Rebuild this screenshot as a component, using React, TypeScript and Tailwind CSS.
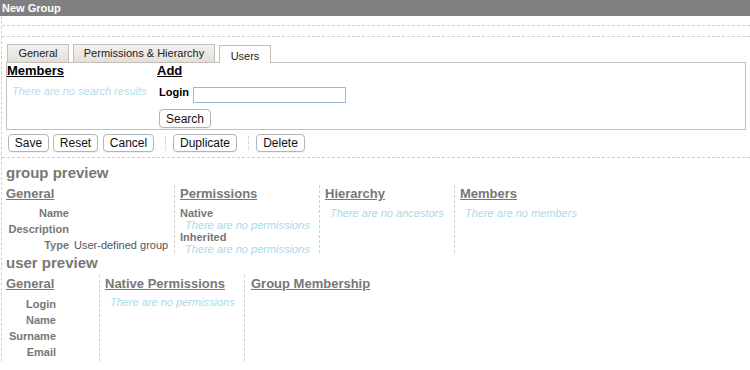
const font = { fontFamily: '"Liberation Sans", Arial, sans-serif' };

function Btn({ children, className = "" }: { children: React.ReactNode; className?: string }) {
  return (
    <button
      className={`h-[18px] rounded-[4px] border border-[#b4b4b4] bg-white text-[12px] leading-none text-[#111] text-center shadow-[0_1px_0_rgba(0,0,0,0.05)] ${className}`}
    >
      {children}
    </button>
  );
}

function Heading({ children, className = "" }: { children: React.ReactNode; className?: string }) {
  return <div className={`text-[13px] font-bold underline text-[#777] leading-[16px] ${className}`}>{children}</div>;
}

function Empty({ children, className = "" }: { children: React.ReactNode; className?: string }) {
  return <div className={`text-[11px] italic text-[#a6dbe6] leading-[12px] ${className}`}>{children}</div>;
}

export default function App() {
  return (
    <div style={font} className="w-[750px] h-[370px] bg-white overflow-hidden text-[#333]">
      {/* title bar */}
      <div className="h-[16px] bg-[#808080] text-white text-[11px] font-bold leading-[16px] px-[2px]">New Group</div>

      <div className="ml-[1px] border-l border-dashed border-[#cfcfcf] pt-[9px]">
        <div className="border-t border-dashed border-[#cfcfcf] h-[11px]" />
        <div className="border-t border-dashed border-[#cfcfcf] h-[8px]" />

        {/* tabs */}
        <div className="pl-[4px]">
          <div className="flex items-end gap-[4px] pl-[1px] h-[18px]">
            <div className="w-[62px] text-center h-[18px] border border-b-0 border-[#c3bfb8] bg-gradient-to-b from-[#f2f1ee] to-[#e3e0da] text-[11px] leading-[17px] text-[#222]">General</div>
            <div className="w-[142px] text-center h-[18px] border border-b-0 border-[#c3bfb8] bg-gradient-to-b from-[#f2f1ee] to-[#e3e0da] text-[11px] leading-[17px] text-[#222]">Permissions &amp; Hierarchy</div>
            <div className="w-[52px] text-center h-[18px] border border-b-0 border-[#c3bfb8] bg-white text-[11px] leading-[20px] text-[#222] -mb-px relative z-10">Users</div>
          </div>
          <div className="w-[740px] h-[68px] border border-[#c3bfb8] flex">
            <div className="w-[150px]">
              <div className="text-[13px] font-bold underline text-black leading-[16px]">Members</div>
              <Empty className="pl-[5px] mt-[6px] !text-[#b0e0ea]">There are no search results</Empty>
            </div>
            <div>
              <div className="text-[13px] font-bold underline text-black leading-[16px]">Add</div>
              <div className="flex items-start mt-[8px] pl-[2px]">
                <span className="text-[11px] font-bold text-black leading-[12px] mt-[-1px]">Login</span>
                <input className="ml-[4px] w-[153px] h-[16px] border border-[#9bb8d6] outline-none" />
              </div>
              <Btn className="ml-[2px] mt-[6px] w-[52px] h-[19px]">Search</Btn>
            </div>
          </div>
        </div>

        {/* buttons */}
        <div className="flex items-center h-[22px] pl-[6px] pt-[3px]">
          <Btn className="w-[41px]">Save</Btn>
          <Btn className="ml-[4px] w-[45px]">Reset</Btn>
          <Btn className="ml-[5px] w-[51px]">Cancel</Btn>
          <div className="ml-[11px] mr-[7px] h-[14px] border-l border-dotted border-[#c8c8c8]" />
          <Btn className="w-[64px]">Duplicate</Btn>
          <div className="ml-[11px] mr-[7px] h-[14px] border-l border-dotted border-[#c8c8c8]" />
          <Btn className="w-[49px]">Delete</Btn>
        </div>
        <div className="mt-[5px] border-t border-dashed border-[#cfcfcf]" />

        {/* group preview */}
        <div className="pl-[4px] pt-[6px]">
          <div className="text-[15px] font-bold text-[#777] leading-[17px]">group preview</div>
          <div className="flex mt-[4px]">
            <div className="w-[168px] pt-[1px]">
              <Heading>General</Heading>
              <div className="grid grid-cols-[63px_1fr] gap-x-[5px] mt-[3px] text-[11px] leading-[16px]">
                <span className="font-bold text-[#777] text-right">Name</span><span />
                <span className="font-bold text-[#777] text-right">Description</span><span />
                <span className="font-bold text-[#777] text-right">Type</span><span className="text-[#555]">User-defined group</span>
              </div>
            </div>
            <div className="w-[145px] border-l border-dashed border-[#cfcfcf] pl-[5px] pt-[1px] h-[68px]">
              <Heading>Permissions</Heading>
              <div className="text-[11px] font-bold text-[#777] leading-[12px] mt-[5px]">Native</div>
              <Empty className="pl-[5px]">There are no permissions</Empty>
              <div className="text-[11px] font-bold text-[#777] leading-[12px]">Inherited</div>
              <Empty className="pl-[5px]">There are no permissions</Empty>
            </div>
            <div className="w-[135px] border-l border-dashed border-[#cfcfcf] pl-[5px] pt-[1px] h-[68px]">
              <Heading>Hierarchy</Heading>
              <Empty className="pl-[5px] mt-[5px]">There are no ancestors</Empty>
            </div>
            <div className="border-l border-dashed border-[#cfcfcf] pl-[5px] pt-[1px] h-[68px]">
              <Heading>Members</Heading>
              <Empty className="pl-[5px] mt-[5px]">There are no members</Empty>
            </div>
          </div>

          {/* user preview */}
          <div className="text-[15px] font-bold text-[#777] leading-[17px] mt-[1px]">user preview</div>
          <div className="flex mt-[4px]">
            <div className="w-[93px] pt-[1px]">
              <Heading>General</Heading>
              <div className="w-[50px] mt-[4px] text-[11px] leading-[16px] font-bold text-[#777] text-right">
                <div>Login</div>
                <div>Name</div>
                <div>Surname</div>
                <div>Email</div>
              </div>
            </div>
            <div className="w-[145px] border-l border-dashed border-[#cfcfcf] pl-[5px] pt-[1px] h-[86px]">
              <Heading>Native Permissions</Heading>
              <Empty className="pl-[5px] mt-[4px]">There are no permissions</Empty>
            </div>
            <div className="border-l border-dashed border-[#cfcfcf] pl-[6px] pt-[1px] h-[86px]">
              <Heading>Group Membership</Heading>
            </div>
          </div>
        </div>
      </div>
    </div>
  );
}
